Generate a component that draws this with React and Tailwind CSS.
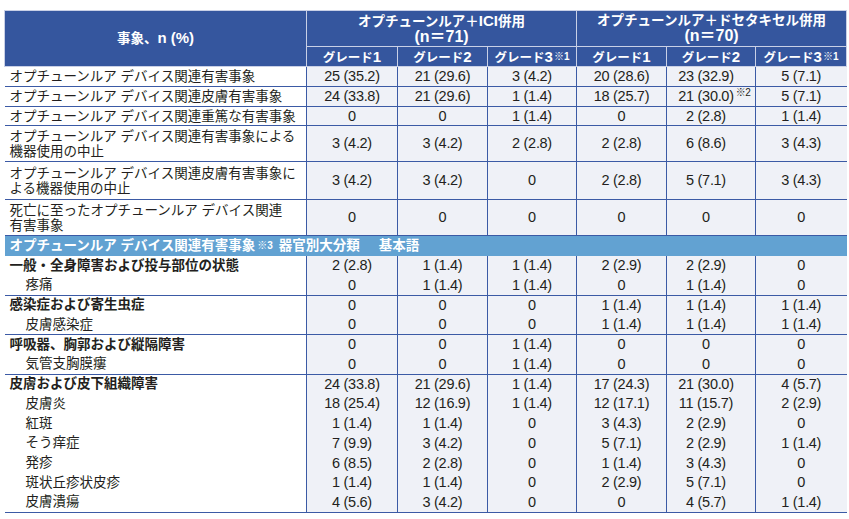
const FONT = "font-['Liberation_Sans',Arial,'Noto_Sans_CJK_JP',sans-serif]";

const topRows = [
  { label: ["オプチューンルア デバイス関連有害事象"], h: "h-[20px]", v: ["25 (35.2)", "21 (29.6)", "3 (4.2)", "20 (28.6)", "23 (32.9)", "5 (7.1)"] },
  { label: ["オプチューンルア デバイス関連皮膚有害事象"], h: "h-[20px]", v: ["24 (33.8)", "21 (29.6)", "1 (1.4)", "18 (25.7)", "21 (30.0)*2", "5 (7.1)"] },
  { label: ["オプチューンルア デバイス関連重篤な有害事象"], h: "h-[19px]", v: ["0", "0", "1 (1.4)", "0", "2 (2.8)", "1 (1.4)"] },
  { label: ["オプチューンルア デバイス関連有害事象による", "機器使用の中止"], h: "h-[36px]", v: ["3 (4.2)", "3 (4.2)", "2 (2.8)", "2 (2.8)", "6 (8.6)", "3 (4.3)"] },
  { label: ["オプチューンルア デバイス関連皮膚有害事象に", "よる機器使用の中止"], h: "h-[38px]", v: ["3 (4.2)", "3 (4.2)", "0", "2 (2.8)", "5 (7.1)", "3 (4.3)"] },
  { label: ["死亡に至ったオプチューンルア デバイス関連", "有害事象"], h: "h-[36px]", v: ["0", "0", "0", "0", "0", "0"] },
];

const groups = [
  [
    ["一般・全身障害および投与部位の状態", "2 (2.8)", "1 (1.4)", "1 (1.4)", "2 (2.9)", "2 (2.9)", "0"],
    ["疼痛", "0", "1 (1.4)", "1 (1.4)", "0", "1 (1.4)", "0"],
  ],
  [
    ["感染症および寄生虫症", "0", "0", "0", "1 (1.4)", "1 (1.4)", "1 (1.4)"],
    ["皮膚感染症", "0", "0", "0", "1 (1.4)", "1 (1.4)", "1 (1.4)"],
  ],
  [
    ["呼吸器、胸郭および縦隔障害", "0", "0", "1 (1.4)", "0", "0", "0"],
    ["気管支胸膜瘻", "0", "0", "1 (1.4)", "0", "0", "0"],
  ],
  [
    ["皮膚および皮下組織障害", "24 (33.8)", "21 (29.6)", "1 (1.4)", "17 (24.3)", "21 (30.0)", "4 (5.7)"],
    ["皮膚炎", "18 (25.4)", "12 (16.9)", "1 (1.4)", "12 (17.1)", "11 (15.7)", "2 (2.9)"],
    ["紅斑", "1 (1.4)", "1 (1.4)", "0", "3 (4.3)", "2 (2.9)", "0"],
    ["そう痒症", "7 (9.9)", "3 (4.2)", "0", "5 (7.1)", "2 (2.9)", "1 (1.4)"],
    ["発疹", "6 (8.5)", "2 (2.8)", "0", "1 (1.4)", "3 (4.3)", "0"],
    ["斑状丘疹状皮疹", "1 (1.4)", "1 (1.4)", "0", "2 (2.9)", "5 (7.1)", "0"],
    ["皮膚潰瘍", "4 (5.6)", "3 (4.2)", "0", "0", "4 (5.7)", "1 (1.4)"],
  ],
];

function Val({ text }) {
  if (text.endsWith("*2")) {
    return (
      <span className="relative">
        {text.slice(0, -2)}
        <span className="absolute left-full top-[0px] text-[10px] ml-[2px] leading-none">※2</span>
      </span>
    );
  }
  return text;
}

function DataCells({ values, border }) {
  return values.map((v, i) => (
    <td
      key={i}
      className={[
        "bg-[#eff1f7] border-l border-[#3b5aa5] text-center p-0 leading-none text-[14.5px] tracking-[-0.3px]",
        i === 4 ? "pr-[10px]" : "",
        border,
      ].join(" ")}
    >
      <Val text={v} />
    </td>
  ));
}

function Grade({ n, note }) {
  return (
    <th className="border border-[#c9d0e6] h-[20px] p-0 font-bold text-[12.5px] leading-none">
      グレード<span className="text-[15px]">{n}</span>
      {note && <sup className="text-[10px] ml-[1px] relative top-[-2px]">※1</sup>}
    </th>
  );
}

export default function App() {
  return (
    <div className={`w-[849px] h-[519px] bg-white pt-[10px] pl-[4px] ${FONT} text-[#231f20]`}>
      <table className="table-fixed border-collapse w-[842px] text-[13.5px]">
        <colgroup>
          <col className="w-[302px]" />
          <col className="w-[91px]" />
          <col className="w-[90px]" />
          <col className="w-[89px]" />
          <col className="w-[90px]" />
          <col className="w-[89px]" />
          <col className="w-[91px]" />
        </colgroup>
        <thead className="bg-[#35569e] text-white">
          <tr className="h-[36px]">
            <th rowSpan={2} className="border border-[#c9d0e6] font-bold text-[13.5px] p-0">
              事象、<span className="text-[15px]">n (%)</span>
            </th>
            <th colSpan={3} className="border border-[#c9d0e6] font-bold text-[13.5px] leading-[15px] p-0">
              オプチューンルア＋<span className="text-[15px]">ICI</span>併用
              <br />
              <span className="text-[16px]">(n＝71)</span>
            </th>
            <th colSpan={3} className="border border-[#c9d0e6] font-bold text-[13.5px] leading-[15px] p-0">
              オプチューンルア＋ドセタキセル併用
              <br />
              <span className="text-[16px]">(n＝70)</span>
            </th>
          </tr>
          <tr>
            <Grade n={1} />
            <Grade n={2} />
            <Grade n={3} note />
            <Grade n={1} />
            <Grade n={2} />
            <Grade n={3} note />
          </tr>
        </thead>
        <tbody>
          {topRows.map((r, i) => (
            <tr key={i} className={r.h}>
              <td className="border-b border-[#3b5aa5] pl-[5px] pr-0 py-0 leading-[15px] bg-white">
                {r.label.map((l, j) => (
                  <div key={j}>{l}</div>
                ))}
              </td>
              <DataCells values={r.v} border="border-b" />
            </tr>
          ))}
          <tr className="h-[20px]">
            <td colSpan={7} className="bg-[#62a2d2] text-white font-bold pl-[5px] p-0 leading-none">
              オプチューンルア デバイス関連有害事象
              <sup className="text-[10px] ml-[2px] relative top-[-1px]">※3</sup>
              <span className="ml-[6px]">器官別大分類</span>
              <span className="ml-[19px]">基本語</span>
            </td>
          </tr>
          {groups.map((g, gi) =>
            g.map((row, ri) => {
              const last = ri === g.length - 1;
              const border = last ? "border-b" : "";
              return (
                <tr key={`${gi}-${ri}`} className="h-[19.75px]">
                  <td
                    className={[
                      "bg-white p-0 leading-none border-[#3b5aa5]",
                      ri === 0 ? "pl-[5px] font-bold" : "pl-[21px]",
                      border,
                    ].join(" ")}
                  >
                    {row[0]}
                  </td>
                  <DataCells values={row.slice(1)} border={border} />
                </tr>
              );
            })
          )}
        </tbody>
      </table>
    </div>
  );
}
